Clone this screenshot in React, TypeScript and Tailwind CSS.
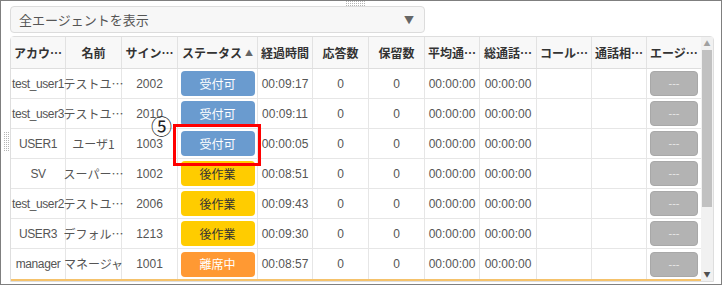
import React from "react";

type Row = {
  acc: string;
  name: string;
  sign: string;
  status: "blue" | "yellow" | "orange";
  label: string;
  elapsed: string;
};

const rows: Row[] = [
  { acc: "test_user1", name: "テストユ…", sign: "2002", status: "blue", label: "受付可", elapsed: "00:09:17" },
  { acc: "test_user3", name: "テストユ…", sign: "2010", status: "blue", label: "受付可", elapsed: "00:09:11" },
  { acc: "USER1", name: "ユーザ1", sign: "1003", status: "blue", label: "受付可", elapsed: "00:00:05" },
  { acc: "SV", name: "スーパー…", sign: "1002", status: "yellow", label: "後作業", elapsed: "00:08:51" },
  { acc: "test_user2", name: "テストユ…", sign: "2006", status: "yellow", label: "後作業", elapsed: "00:09:43" },
  { acc: "USER3", name: "デフォル…", sign: "1213", status: "yellow", label: "後作業", elapsed: "00:09:30" },
  { acc: "manager", name: "マネージャ", sign: "1001", status: "orange", label: "離席中", elapsed: "00:08:57" },
];

const headers = [
  "アカウ…",
  "名前",
  "サイン…",
  "STATUS",
  "経過時間",
  "応答数",
  "保留数",
  "平均通…",
  "総通話…",
  "コール…",
  "通話相…",
  "エージ…",
];

const cols = "grid grid-cols-[55px_56px_56px_80px_55px_56px_56px_55px_57px_55px_55px_54px]";
const jp = "font-['Noto_Sans_CJK_JP',sans-serif]";

function StatusBtn({ s, label }: { s: Row["status"]; label: string }) {
  const cls =
    s === "blue"
      ? "bg-[#6a9bcf] text-white"
      : s === "yellow"
      ? "bg-[#ffcc00] text-[#333]"
      : "bg-[#ff9933] text-white";
  return (
    <div className={`w-[74px] h-[25px] rounded-[4px] flex items-center justify-center text-[12px] ${jp} ${cls}`}>
      {label}
    </div>
  );
}

function Dots({ cols: c, rows: r }: { cols: number; rows: number }) {
  const dots = [];
  for (let i = 0; i < c; i++)
    for (let j = 0; j < r; j++)
      dots.push(<rect key={`${i}-${j}`} x={i * 2} y={j * 2} width="1" height="1" fill="#b5b5b5" />);
  return (
    <svg width={c * 2} height={r * 2}>
      {dots}
    </svg>
  );
}

function isJp(s: string) {
  return /[^\x00-\x7f]/.test(s);
}

export default function App() {
  return (
    <div className="relative w-[722px] h-[285px] border border-[#7f7f7f] bg-white overflow-hidden font-['Liberation_Sans','Noto_Sans_CJK_JP',sans-serif]">
      {/* top drag handle */}
      <div className="absolute left-[345px] top-0">
        <Dots cols={10} rows={3} />
      </div>
      {/* left drag handle */}
      <div className="absolute left-[3px] top-[131px]">
        <Dots cols={3} rows={10} />
      </div>

      <div className="pl-[9px] pt-[5px] flex flex-col">
        {/* dropdown */}
        <div className="w-[415px] h-[27px] rounded-[4px] border border-[#dcdcdc] bg-[#f7f7f7] flex items-center justify-between pl-[8px] pr-[10px]">
          <span className={`text-[13px] text-[#555] ${jp}`}>全エージェントを表示</span>
          <span className={`text-[10px] text-[#666] ${jp}`}>▼</span>
        </div>

        {/* table */}
        <div className="mt-[3px] w-[704px] border border-[#dedede] rounded-t-[4px] flex">
          <div className="w-[690px] border-b-2 border-[#f5c26b]">
            <div className={`${cols} h-[32px] bg-[#f8f8f8] border-b border-[#dedede]`}>
              {headers.map((h, i) => (
                <div
                  key={i}
                  className={`flex items-center justify-center text-[12px] font-semibold text-[#333] whitespace-nowrap ${jp} ${
                    i < headers.length - 1 ? "border-r border-[#e2e2e2]" : ""
                  }`}
                >
                  {h === "STATUS" ? (
                    <span className="flex items-center gap-[3px]">
                      ステータス<span className="text-[8px] text-[#666]">▲</span>
                    </span>
                  ) : (
                    h
                  )}
                </div>
              ))}
            </div>
            {rows.map((r, idx) => {
              const cells: React.ReactNode[] = [
                r.acc,
                r.name,
                r.sign,
                <StatusBtn s={r.status} label={r.label} />,
                r.elapsed,
                "0",
                "0",
                "00:00:00",
                "00:00:00",
                "",
                "",
                <div className="w-[48px] h-[25px] rounded-[4px] bg-[#b3b3b3] border border-[#a8a8a8] flex items-center justify-center text-[11px] text-[#e8e8e8]">
                  ---
                </div>,
              ];
              return (
                <div
                  key={idx}
                  className={`${cols} h-[30px] ${idx < rows.length - 1 ? "border-b border-[#e6e6e6]" : ""}`}
                >
                  {cells.map((c, i) => (
                    <div
                      key={i}
                      className={`flex items-center justify-center text-[12px] text-[#555] whitespace-nowrap overflow-visible ${
                        typeof c === "string" && isJp(c) ? jp : ""
                      } ${i === 0 ? "tracking-[-0.4px]" : ""} ${i < cells.length - 1 ? "border-r border-[#e6e6e6]" : ""}`}
                    >
                      {c}
                    </div>
                  ))}
                </div>
              );
            })}
          </div>
          {/* scrollbar */}
          <div className={`w-[12px] bg-[#f1f1f1] flex flex-col items-center ${jp}`}>
            <div className="h-[13px] flex items-center justify-center text-[7px] text-[#a0a0a0]">▲</div>
            <div className="w-[10px] h-[157px] bg-[#c1c1c1]" />
            <div className="flex-1" />
            <div className="h-[14px] flex items-center justify-center text-[7px] text-[#505050]">▼</div>
          </div>
        </div>
      </div>

      {/* highlight overlay */}
      <div className={`absolute left-[150px] top-[114px] text-[21px] leading-none text-[#222] font-normal ${jp}`}>
        ⑤
      </div>
      <div className="absolute left-[172px] top-[123px] w-[88px] h-[42px] border-[3px] border-[#ff0000]" />
    </div>
  );
}
